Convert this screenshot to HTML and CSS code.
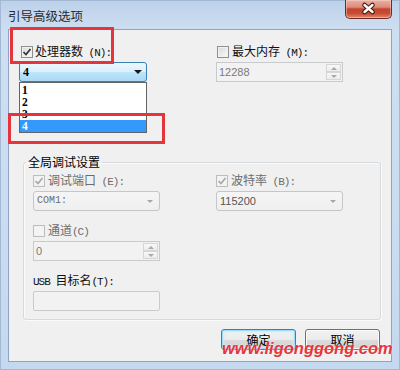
FILE: index.html
```html
<html>
    <head>
        <title>引导高级选项</title>
        <link rel="stylesheet" href="styles.css">
    </head>
    <body>
        <div class="window">
            <div class="titlebar">
                <span class="title">引导高级选项</span>
                <button class="close">
                    <svg width="47" height="19" viewBox="0 0 47 19">
                        <path d="M19.5 6 L27.5 13 M27.5 6 L19.5 13" stroke="#3a1912" stroke-width="4.5" stroke-linecap="round"/>
                        <path d="M19.5 6 L27.5 13 M27.5 6 L19.5 13" stroke="#fff" stroke-width="2.4" stroke-linecap="round"/>
                    </svg>
                </button>
            </div>
            <div class="client">
                <div class="top">
                    <div class="field">
                        <label class="check indent2">
                            <span class="box"><svg width="10" height="10" viewBox="0 0 10 10"><path d="M1.5 5 L4 7.5 L8.5 2" fill="none" stroke="#333" stroke-width="1.7"/></svg></span>
                            <span class="text">处理器数<span class="key"> (N):</span></span>
                        </label>
                        <div class="combo hot">
                            <span class="value serif">4</span>
                            <span class="arrow dark"></span>
                            <ul class="droplist">
                                <li>1</li>
                                <li>2</li>
                                <li>3</li>
                                <li class="selected">4</li>
                            </ul>
                        </div>
                    </div>
                    <div class="field">
                        <label class="check indent1">
                            <span class="box"></span>
                            <span class="text">最大内存<span class="key"> (M):</span></span>
                        </label>
                        <div class="spin">
                            <span class="value num">12288</span>
                            <span class="spin-btns"><span class="up"></span><span class="down"></span></span>
                        </div>
                    </div>
                </div>

                <fieldset class="group">
                    <legend>全局调试设置</legend>
                    <div class="group-grid">
                        <div class="field">
                            <label class="check off">
                                <span class="box"><svg width="10" height="10" viewBox="0 0 10 10"><path d="M1.5 5 L4 7.5 L8.5 2" fill="none" stroke="#a8a8a8" stroke-width="1.7"/></svg></span>
                                <span class="text">调试端口<span class="key"> (E):</span></span>
                            </label>
                            <div class="combo">
                                <span class="value mono">COM1:</span>
                                <span class="arrow"></span>
                            </div>
                        </div>
                        <div class="field">
                            <label class="check off">
                                <span class="box"><svg width="10" height="10" viewBox="0 0 10 10"><path d="M1.5 5 L4 7.5 L8.5 2" fill="none" stroke="#a8a8a8" stroke-width="1.7"/></svg></span>
                                <span class="text">波特率<span class="key"> (B):</span></span>
                            </label>
                            <div class="combo">
                                <span class="value num dim">115200</span>
                                <span class="arrow"></span>
                            </div>
                        </div>
                        <div class="field">
                            <label class="check off">
                                <span class="box"></span>
                                <span class="text">通道<span class="key">(C)</span></span>
                            </label>
                            <div class="spin">
                                <span class="value num">0</span>
                                <span class="spin-btns"><span class="up"></span><span class="down"></span></span>
                            </div>
                        </div>
                        <div></div>
                        <div class="field">
                            <label class="check"><span class="text"><span class="key">USB </span>目标名<span class="key">(T):</span></span></label>
                            <div class="textbox"></div>
                        </div>
                    </div>
                </fieldset>

                <div class="buttons">
                    <button class="btn focused">确定</button>
                    <button class="btn">取消</button>
                </div>
            </div>

            <!-- annotations drawn on top of the screenshot -->
            <div class="mark mark-one"></div>
            <div class="mark mark-two"></div>
            <div class="watermark">www.ligonggong.com</div>
        </div>
    </body>
</html>
```

FILE: styles.css
```css
* {
    box-sizing: border-box;
}
body {
    margin: 0;
    font-family: "Noto Sans CJK SC", sans-serif;
    font-size: 12px;
}
.window {
    position: relative;
    width: 400px;
    height: 370px;
    border: 1px solid #a3b8d2;
    background: linear-gradient(to bottom, #bcd1ea, #cfdff2 30px, #cadcf0 60%, #c4d8ef);
    display: flex;
    flex-direction: column;
}
.titlebar {
    height: 28px;
    display: flex;
    align-items: flex-start;
    padding: 8px 0 0 7px;
    position: relative;
}
.title {
    font-size: 12.5px;
    line-height: 14px;
    color: #2a2a2a;
}
.close {
    position: absolute;
    top: -1px;
    right: 7px;
    width: 47px;
    height: 19px;
    padding: 0;
    border: 1px solid #6e2b22;
    border-top: none;
    border-radius: 0 0 5px 5px;
    background: linear-gradient(to bottom, #ebb1a4, #dc8b79 40%, #c4432c 50%, #c94c34 75%, #e08a72);
    box-shadow: inset 0 0 0 1px rgba(255, 220, 210, 0.45);
}
.close svg {
    display: block;
    margin: -1px 0 0 -1px;
}
.client {
    margin: 0 7px;
    height: 333px;
    border: 1px solid #8ea4c1;
    background: #f0f0f0;
}
.top {
    display: grid;
    grid-template-columns: 128px 127px;
    column-gap: 69px;
    padding: 15px 0 0 10px;
}
.field {
    display: flex;
    flex-direction: column;
    gap: 3px;
}
.check {
    display: flex;
    align-items: center;
    gap: 3px;
    height: 14px;
    line-height: 14px;
    color: #111;
}
.check .text {
    white-space: nowrap;
}
.check.indent2 {
    padding-left: 2px;
    gap: 2px;
}
.check.indent1 {
    padding-left: 1px;
}
.check.off {
    color: #6d6d6d;
}
.key {
    font-family: "Liberation Mono", monospace;
    font-size: 11px;
    letter-spacing: -1px;
    white-space: pre;
}
.box {
    width: 12px;
    height: 12px;
    flex: none;
    display: flex;
    align-items: center;
    justify-content: center;
    border: 1px solid #8e8f8f;
    background: linear-gradient(135deg, #d9d9d9, #fafafa);
    box-shadow: inset 0 0 0 1px #f2f2f2;
}
.check.off .box {
    border-color: #bdbdbd;
    background: #f4f4f4;
}

/* combo boxes */
.combo {
    position: relative;
    height: 20px;
    display: flex;
    align-items: center;
    padding-left: 3px;
    border: 1px solid #c5c6c8;
    border-radius: 3px;
    background: linear-gradient(to bottom, #f5f5f5, #efefef);
    color: #6d6d6d;
}
.combo.hot {
    border-color: #3c7fb1;
    background: linear-gradient(to bottom, #ecf7fd, #daf0fc 50%, #bee6fd 50%, #a8d9f5);
    color: #000;
}
.value {
    line-height: 14px;
}
.serif {
    font-family: "Liberation Serif", serif;
    font-size: 12px;
    font-weight: bold;
}
.mono {
    font-family: "Liberation Mono", monospace;
    font-size: 10px;
}
.num {
    font-family: "Liberation Sans", sans-serif;
    font-size: 11px;
}
.dim {
    color: #555;
}
.arrow {
    margin-left: auto;
    margin-right: 6px;
    width: 0;
    height: 0;
    border-left: 3px solid transparent;
    border-right: 3px solid transparent;
    border-top: 3px solid #a6a6a6;
}
.arrow.dark {
    margin-right: 4px;
    border-left-width: 4px;
    border-right-width: 4px;
    border-top: 4px solid #1a1a1a;
}
.droplist {
    position: absolute;
    top: 19px;
    left: -1px;
    width: 128px;
    margin: 0;
    padding: 1px 0 0;
    list-style: none;
    border: 1px solid #646464;
    background: #fff;
    z-index: 2;
}
.droplist li {
    height: 12px;
    line-height: 12px;
    padding-left: 2px;
    font-family: "Liberation Serif", serif;
    font-size: 11.5px;
    font-weight: bold;
    color: #000;
}
.droplist li.selected {
    background: #3399ff;
    color: #fff;
}

/* spinners and text boxes */
.spin {
    height: 20px;
    display: flex;
    align-items: center;
    padding: 0 1px 0 2px;
    border: 1px solid #c8cacd;
    background: #f2f2f2;
    color: #7a7a7a;
}
.spin-btns {
    margin-left: auto;
    width: 15px;
    height: 16px;
    display: flex;
    flex-direction: column;
}
.spin-btns span {
    flex: 1;
    display: flex;
    align-items: center;
    justify-content: center;
    border: 1px solid #d6d6d6;
    background: linear-gradient(to bottom, #f8f8f8, #ececec);
}
.spin-btns .up::before {
    content: "";
    border-left: 3px solid transparent;
    border-right: 3px solid transparent;
    border-bottom: 3px solid #a9a9a9;
}
.spin-btns .down::before {
    content: "";
    border-left: 3px solid transparent;
    border-right: 3px solid transparent;
    border-top: 3px solid #a9a9a9;
}
.textbox {
    height: 20px;
    border: 1px solid #c8cacd;
    border-radius: 2px;
    background: #f2f2f2;
}

/* group box */
.group {
    margin: 73px 10px 0 14px;
    padding: 5px 9px 8px;
    border: 1px solid #d5dadf;
    border-radius: 3px;
    box-shadow: inset 1px 1px 0 #fbfbfb, 1px 1px 0 #fbfbfb;
    min-width: 0;
}
.group legend {
    margin-left: -7px;
    padding: 0 2px;
    line-height: 14px;
    color: #000;
}
.group-grid {
    display: grid;
    grid-template-columns: 127px 127px;
    column-gap: 56px;
    row-gap: 13px;
}

/* buttons */
.buttons {
    display: flex;
    justify-content: flex-end;
    gap: 9px;
    margin-top: 9px;
    padding-right: 11px;
}
.btn {
    width: 75px;
    height: 21px;
    padding: 0;
    font-family: "Noto Sans CJK SC", sans-serif;
    font-size: 12px;
    line-height: 14px;
    color: #000;
    border: 1px solid #707070;
    border-radius: 3px;
    background: linear-gradient(to bottom, #f2f2f2, #ebebeb 50%, #dddddd 50%, #cfcfcf);
    box-shadow: inset 0 0 0 1px #fbfbfb;
}
.btn.focused {
    border-color: #3c7fb1;
    box-shadow: inset 0 0 0 1px #9fdcf8, inset 0 0 2px 2px #c8ecfb;
}

/* red annotation boxes and watermark */
.mark {
    position: absolute;
    border: 3px solid #e2353e;
    z-index: 3;
}
.mark-one {
    left: 9px;
    top: 26px;
    width: 104px;
    height: 37px;
}
.mark-two {
    left: 7px;
    top: 112px;
    width: 157px;
    height: 31px;
}
.watermark {
    position: absolute;
    left: 221px;
    top: 338px;
    font-family: "Liberation Sans", sans-serif;
    font-size: 16.5px;
    font-weight: bold;
    font-style: italic;
    color: #e4363d;
    text-shadow: 0 0 2px rgba(255, 255, 255, 0.9);
    z-index: 3;
}
```
